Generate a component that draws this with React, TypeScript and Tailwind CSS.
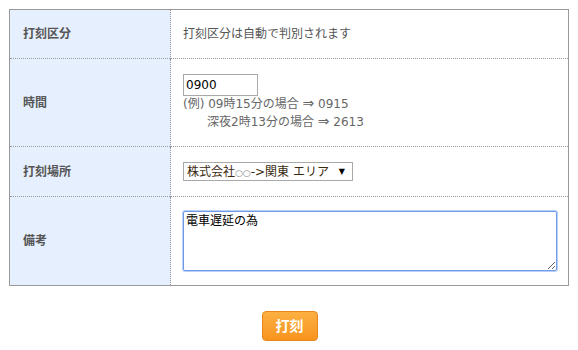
import React from "react";

const font = "font-['DejaVu_Sans','Noto_Sans_CJK_JP',sans-serif]";

function LabelCell({ children }: { children: React.ReactNode }) {
  return (
    <th className="w-[161px] border-r border-dotted border-[#999] bg-[#e5effd] pl-[13px] text-left align-middle text-[12px] font-bold text-[#555]">
      {children}
    </th>
  );
}

export default function App() {
  return (
    <div className={`h-[350px] w-[578px] bg-white ${font}`}>
      <div className="px-[9px] pt-[9px]">
        <table className="w-[560px] border-collapse border border-[#999]">
          <tbody>
            <tr className="h-[49px] border-b border-dotted border-[#999]">
              <LabelCell>打刻区分</LabelCell>
              <td className="pl-[12px] text-[12px] text-[#555]">打刻区分は自動で判別されます</td>
            </tr>
            <tr className="h-[88px] border-b border-dotted border-[#999]">
              <LabelCell>時間</LabelCell>
              <td className="pl-[12px] text-[12px] text-[#555]">
                <input
                  defaultValue="0900"
                  className="block h-[22px] w-[75px] border border-[#a9a9a9] px-[2px] text-[12px] text-black outline-none"
                />
                <div className="mt-[-1px] leading-[18px] text-[#666]">
                  <div>
                    (例) 09時15分の場合 <span className="text-[14px] leading-none">⇒</span> 0915
                  </div>
                  <div className="pl-[24px]">
                    深夜2時13分の場合 <span className="text-[14px] leading-none">⇒</span> 2613
                  </div>
                </div>
              </td>
            </tr>
            <tr className="h-[50px] border-b border-dotted border-[#999]">
              <LabelCell>打刻場所</LabelCell>
              <td className="pl-[12px]">
                <div className="relative flex h-[19px] w-[170px] items-center border border-[#a9a9a9] bg-white pl-[3px] text-[12px] text-[#3a2a10]">
                  <span>
                    株式会社<span className="text-[9px] text-[#8a8a8a]">○○</span>-&gt;関東 エリア
                  </span>
                  <span className="absolute right-[7px] top-[3px] text-[8px] text-black">▼</span>
                </div>
              </td>
            </tr>
            <tr className="h-[89px]">
              <LabelCell>備考</LabelCell>
              <td className="pl-[12px]">
                <textarea
                  defaultValue="電車遅延の為"
                  className="block h-[60px] w-[374px] resize-y rounded-[2px] border border-[#6f9ae8] px-[2px] py-[1px] text-[12px] leading-[16px] text-black shadow-[0_0_0_1px_#b9cff5] outline-none"
                />
              </td>
            </tr>
          </tbody>
        </table>
      </div>
      <div className="flex justify-center pt-[25px] pl-[1px]">
        <button
          type="button"
          className="h-[30px] w-[56px] rounded-[4px] border border-[#e8861a] bg-gradient-to-b from-[#fcb040] to-[#f7941d] text-[14px] font-bold text-white"
        >
          打刻
        </button>
      </div>
    </div>
  );
}
